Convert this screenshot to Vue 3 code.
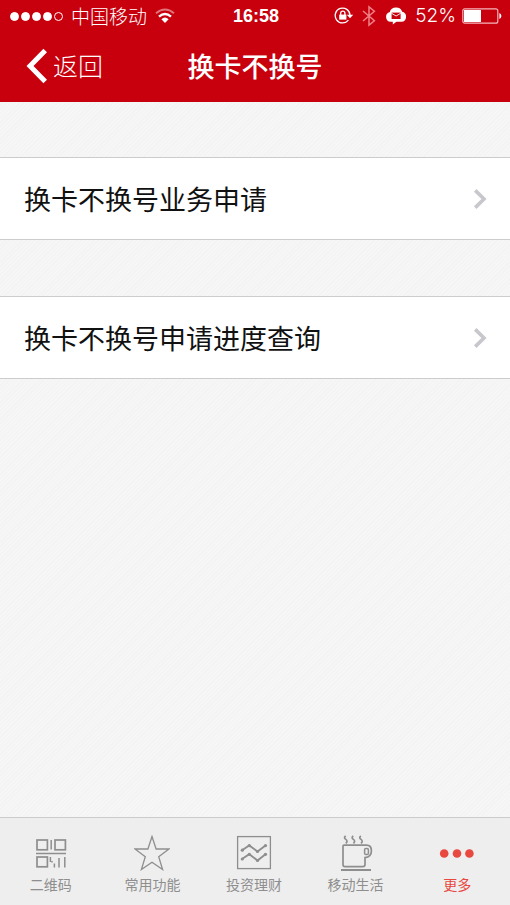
<script setup>
const signal = [true, true, true, true, false]
const items = ['换卡不换号业务申请', '换卡不换号申请进度查询']
const tabs = [
  { id: 'qr', label: '二维码' },
  { id: 'star', label: '常用功能' },
  { id: 'chart', label: '投资理财' },
  { id: 'cup', label: '移动生活' },
  { id: 'more', label: '更多', active: true }
]
</script>

<template>
  <div class="page">
    <header class="top">
      <div class="status">
        <div class="status-left">
          <span class="signal">
            <i v-for="(on, i) in signal" :key="i" class="dot" :class="{ on }"></i>
          </span>
          <span class="carrier">中国移动</span>
          <svg class="wifi" width="20" height="16" viewBox="0 0 20 16" fill="none" stroke="#fff">
            <path d="M1 5.2Q10 -2.2 19 5.2" stroke-width="2" opacity=".45" />
            <path d="M4 8.6Q10 3.4 16 8.6" stroke-width="2.4" />
            <path d="M6.4 11.2Q10 8 13.6 11.2L10 15Z" fill="#fff" stroke="none" />
          </svg>
        </div>
        <time class="time">16:58</time>
        <div class="status-right">
          <svg width="20" height="18" viewBox="0 0 20 18" fill="none" stroke="#fff">
            <path d="M14.4 13.1A7.4 7.4 0 1 1 16 8.2" stroke-width="1.3" />
            <path d="M12.8 7.8H19.2L16 11.2Z" fill="#fff" stroke="none" />
            <rect x="5.2" y="7.6" width="7.2" height="5" fill="#fff" stroke="none" />
            <path d="M6.7 8V6.2a2.1 2.1 0 0 1 4.2 0V8" stroke-width="1.3" />
          </svg>
          <svg class="bluetooth" width="14" height="22" viewBox="0 0 14 22" fill="none" stroke="#ef8087" stroke-width="1.5">
            <path d="M1 6L12.4 15.8L7 20.2V1.8L12.4 6.2L1 16" />
          </svg>
          <svg class="cloud" width="20" height="18" viewBox="0 0 20 18">
            <path d="M3.8 5A6.4 5.8 0 0 1 16.2 4.8A5.1 5.1 0 0 1 15.6 14.8H10.4L6.8 17.4V14.8H4.5A5 5 0 0 1 3.8 5Z" fill="#fff" />
            <rect x="5.6" y="5.6" width="9" height="6.4" fill="#c8000d" />
            <path d="M5.4 6.2L10.1 9L14.8 6.2" fill="none" stroke="#fff" stroke-width=".9" />
          </svg>
          <span class="percent">52%</span>
          <svg width="40" height="16" viewBox="0 0 40 16">
            <rect x=".8" y=".8" width="35" height="14.4" rx="2" fill="none" stroke="#f3b5b9" stroke-width="1.2" />
            <rect x="2" y="2" width="17" height="12" fill="#fff" />
            <path d="M37.4 5V11Q39.4 10.2 39.4 8T37.4 5Z" fill="#fff" />
          </svg>
        </div>
      </div>
      <nav class="nav">
        <button type="button" class="back">
          <svg width="22" height="36" viewBox="0 0 22 36" fill="none" stroke="#fff" stroke-width="5">
            <path d="M19.2 2.4L4 18L19.2 33.6" />
          </svg>
          <span>返回</span>
        </button>
        <h1 class="title">换卡不换号</h1>
      </nav>
    </header>

    <main class="content">
      <a v-for="item in items" :key="item" href="#" class="row">
        <span>{{ item }}</span>
        <svg width="14" height="20" viewBox="0 0 14 20" fill="none" stroke="#c7c7cc" stroke-width="3.6">
          <path d="M2.2 1.4L11 10L2.2 18.6" />
        </svg>
      </a>
    </main>

    <nav class="tabs">
      <a v-for="tab in tabs" :key="tab.id" href="#" class="tab" :class="{ active: tab.active }">
        <svg width="36" height="36" viewBox="0 0 36 36" fill="none" stroke="currentColor" stroke-width="1.3">
          <g v-if="tab.id === 'qr'" stroke-width="1.7">
            <rect x="4" y="5" width="10.4" height="9.8" />
            <rect x="22" y="5" width="10.4" height="9.8" />
            <rect x="4" y="22" width="10.4" height="9.8" />
            <path d="M18.2 5V14.6M3 18.4H33M17.4 22V27M21.4 28.4V32.4M26 23V32.4M31.8 22V32.4M19 26V27.6" stroke-width="1.5" />
          </g>
          <path v-else-if="tab.id === 'star'" d="M18 1.5L22.1 14H35L24.7 21.7L28.6 34.5L18 27.2L7.4 34.5L11.3 21.7L1 14H13.9Z" />
          <g v-else-if="tab.id === 'chart'">
            <rect x="1.6" y="1.6" width="32.8" height="32" />
            <path d="M6 15.2L13.3 10.5L21.5 16.5L29.5 10.5M6 24L13.3 19.2L21.5 25.5L29.5 19.2" stroke-width="1.9" />
            <g fill="currentColor" stroke="none">
              <circle cx="6.3" cy="15.2" r="1.6" /><circle cx="13.3" cy="10.6" r="1.6" />
              <circle cx="21.5" cy="16.5" r="1.6" /><circle cx="29.5" cy="10.6" r="1.6" />
              <circle cx="6.3" cy="24" r="1.6" /><circle cx="13.3" cy="19.3" r="1.6" />
              <circle cx="21.5" cy="25.5" r="1.6" /><circle cx="29.5" cy="19.3" r="1.6" />
            </g>
          </g>
          <g v-else-if="tab.id === 'cup'">
            <path d="M6 10.2H28.5Q33.4 10.2 33.4 15.8Q33.4 22 27 22.6V29.4Q27 31.6 24.8 31.6H7Q5 31.6 5 29.4V11.2Q5 10.2 6 10.2Z" stroke-width="1.7" />
            <rect x="26.6" y="13.4" width="3.8" height="6.2" rx="1.4" stroke-width="1.5" />
            <path d="M3 35H33" stroke-width="2" />
            <path d="M7.6 .8Q5.4 2.8 7.8 4.4T7.8 8.4M15.2 .8Q13 2.8 15.4 4.4T15.4 8.4M22.8 .8Q20.6 2.8 23 4.4T23 8.4" stroke-width="1.7" />
          </g>
          <g v-else fill="currentColor" stroke="none">
            <circle cx="5.2" cy="18.5" r="4.3" />
            <circle cx="18" cy="18.5" r="4.3" />
            <circle cx="30.4" cy="18.5" r="4.3" />
          </g>
        </svg>
        <span>{{ tab.label }}</span>
      </a>
    </nav>
  </div>
</template>

<style>
body {
  margin: 0;
}
</style>

<style scoped>
.page {
  display: flex;
  flex-direction: column;
  min-height: 100vh;
  font-family: "Noto Sans CJK SC", sans-serif;
  background: repeating-linear-gradient(135deg, #f6f6f6 0 2px, #f3f3f3 2px 3px);
}

.top {
  padding-bottom: 2px;
  color: #fff;
  background: #c8000d;
}

.status {
  display: grid;
  grid-template-columns: 1fr auto 1fr;
  align-items: center;
  height: 32px;
  padding: 0 8px 0 10px;
}

.status-left,
.status-right {
  display: flex;
  align-items: center;
}

.status-right {
  justify-content: flex-end;
}

.signal {
  display: flex;
  gap: 2px;
}

.dot {
  box-sizing: border-box;
  width: 9px;
  height: 9px;
  border: 1px solid #fff;
  border-radius: 50%;
}

.dot.on {
  background: #fff;
}

.carrier {
  margin: 0 8px;
  font-size: 19px;
  font-weight: 300;
  line-height: 32px;
}

.time {
  font: 700 18px/32px "Liberation Sans", Arial, sans-serif;
}

.bluetooth {
  margin: 0 10px 0 8px;
}

.percent {
  margin: 0 6px 0 9px;
  font: 300 19px/32px Inter, "Liberation Sans", sans-serif;
}

.nav {
  display: grid;
  grid-template-columns: 1fr auto 1fr;
  align-items: center;
  height: 68px;
  padding: 0 26px;
}

.back {
  display: flex;
  align-items: center;
  gap: 5px;
  padding: 0;
  border: 0;
  background: none;
  color: inherit;
  font-family: inherit;
  font-size: 25px;
  font-weight: 300;
  line-height: 32px;
}

.back span {
  padding-bottom: 2px;
}

.title {
  margin: 0;
  font-size: 27px;
  font-weight: 500;
  line-height: 36px;
}

.content {
  display: flex;
  flex: 1;
  flex-direction: column;
  gap: 56px;
  padding: 55px 0;
}

.row {
  display: flex;
  align-items: center;
  justify-content: space-between;
  box-sizing: border-box;
  height: 83px;
  padding: 0 23px 0 24px;
  border: solid #ccc;
  border-width: 1px 0;
  background: #fff;
  color: #111;
  font-size: 27px;
  font-weight: 400;
  text-decoration: none;
}

.tabs {
  display: grid;
  grid-template-columns: repeat(5, 1fr);
  box-sizing: border-box;
  height: 88px;
  padding: 17px 2px 0 0;
  border-top: 1px solid #ccc;
  background: #eee;
}

.tab {
  display: flex;
  flex-direction: column;
  align-items: center;
  color: #8e8e8e;
  font-size: 14px;
  line-height: 26px;
  text-decoration: none;
}

.tab.active {
  color: #e8483f;
}
</style>
